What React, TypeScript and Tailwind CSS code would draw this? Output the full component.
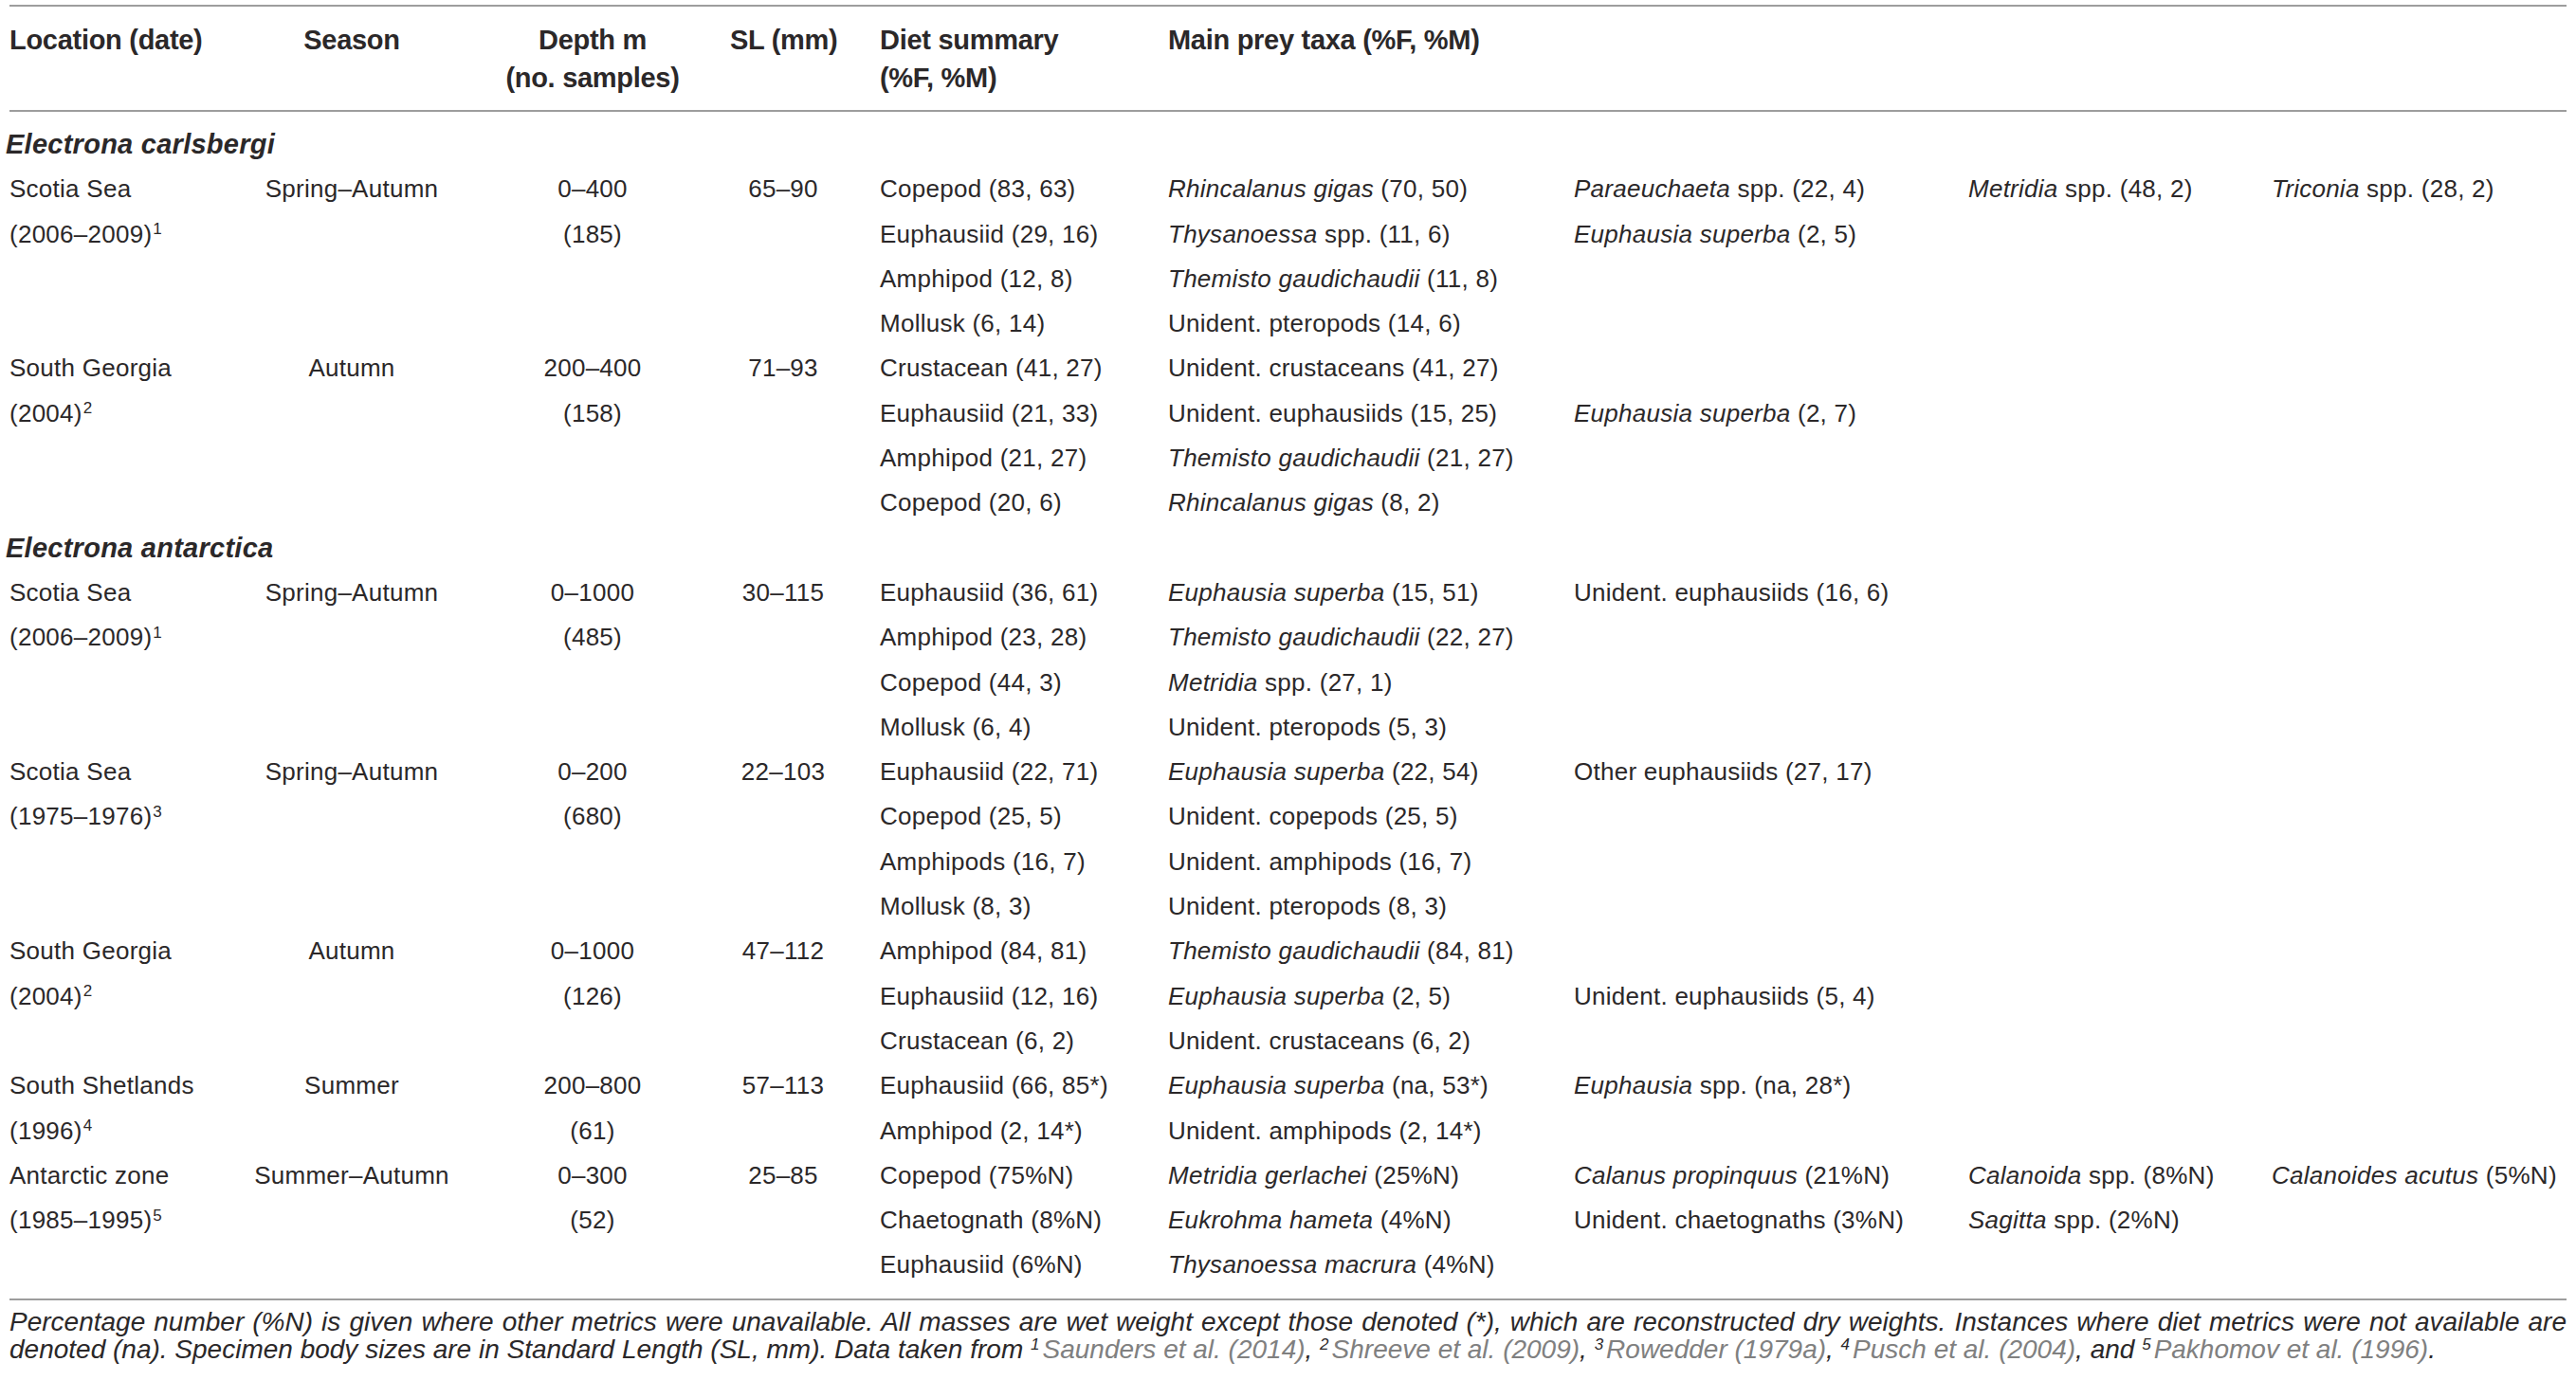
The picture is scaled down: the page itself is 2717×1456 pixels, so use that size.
import React from 'react';

type Group = {
  place: string;
  years: string;
  note: string;
  season: string;
  depth: string;
  samples: string;
  sl: string;
  rows: string[][];
};

type Block = { species: string; groups: Group[] };

// taxa written with _underscores_ around the italic part
const blocks: Block[] = [
  {
    species: 'Electrona carlsbergi',
    groups: [
      {
        place: 'Scotia Sea',
        years: '(2006–2009)',
        note: '1',
        season: 'Spring–Autumn',
        depth: '0–400',
        samples: '(185)',
        sl: '65–90',
        rows: [
          ['Copepod (83, 63)', '_Rhincalanus gigas_ (70, 50)', '_Paraeuchaeta_ spp. (22, 4)', '_Metridia_ spp. (48, 2)', '_Triconia_ spp. (28, 2)'],
          ['Euphausiid (29, 16)', '_Thysanoessa_ spp. (11, 6)', '_Euphausia superba_ (2, 5)'],
          ['Amphipod (12, 8)', '_Themisto gaudichaudii_ (11, 8)'],
          ['Mollusk (6, 14)', 'Unident. pteropods (14, 6)'],
        ],
      },
      {
        place: 'South Georgia',
        years: '(2004)',
        note: '2',
        season: 'Autumn',
        depth: '200–400',
        samples: '(158)',
        sl: '71–93',
        rows: [
          ['Crustacean (41, 27)', 'Unident. crustaceans (41, 27)'],
          ['Euphausiid (21, 33)', 'Unident. euphausiids (15, 25)', '_Euphausia superba_ (2, 7)'],
          ['Amphipod (21, 27)', '_Themisto gaudichaudii_ (21, 27)'],
          ['Copepod (20, 6)', '_Rhincalanus gigas_ (8, 2)'],
        ],
      },
    ],
  },
  {
    species: 'Electrona antarctica',
    groups: [
      {
        place: 'Scotia Sea',
        years: '(2006–2009)',
        note: '1',
        season: 'Spring–Autumn',
        depth: '0–1000',
        samples: '(485)',
        sl: '30–115',
        rows: [
          ['Euphausiid (36, 61)', '_Euphausia superba_ (15, 51)', 'Unident. euphausiids (16, 6)'],
          ['Amphipod (23, 28)', '_Themisto gaudichaudii_ (22, 27)'],
          ['Copepod (44, 3)', '_Metridia_ spp. (27, 1)'],
          ['Mollusk (6, 4)', 'Unident. pteropods (5, 3)'],
        ],
      },
      {
        place: 'Scotia Sea',
        years: '(1975–1976)',
        note: '3',
        season: 'Spring–Autumn',
        depth: '0–200',
        samples: '(680)',
        sl: '22–103',
        rows: [
          ['Euphausiid (22, 71)', '_Euphausia superba_ (22, 54)', 'Other euphausiids (27, 17)'],
          ['Copepod (25, 5)', 'Unident. copepods (25, 5)'],
          ['Amphipods (16, 7)', 'Unident. amphipods (16, 7)'],
          ['Mollusk (8, 3)', 'Unident. pteropods (8, 3)'],
        ],
      },
      {
        place: 'South Georgia',
        years: '(2004)',
        note: '2',
        season: 'Autumn',
        depth: '0–1000',
        samples: '(126)',
        sl: '47–112',
        rows: [
          ['Amphipod (84, 81)', '_Themisto gaudichaudii_ (84, 81)'],
          ['Euphausiid (12, 16)', '_Euphausia superba_ (2, 5)', 'Unident. euphausiids (5, 4)'],
          ['Crustacean (6, 2)', 'Unident. crustaceans (6, 2)'],
        ],
      },
      {
        place: 'South Shetlands',
        years: '(1996)',
        note: '4',
        season: 'Summer',
        depth: '200–800',
        samples: '(61)',
        sl: '57–113',
        rows: [
          ['Euphausiid (66, 85*)', '_Euphausia superba_ (na, 53*)', '_Euphausia_ spp. (na, 28*)'],
          ['Amphipod (2, 14*)', 'Unident. amphipods (2, 14*)'],
        ],
      },
      {
        place: 'Antarctic zone',
        years: '(1985–1995)',
        note: '5',
        season: 'Summer–Autumn',
        depth: '0–300',
        samples: '(52)',
        sl: '25–85',
        rows: [
          ['Copepod (75%N)', '_Metridia gerlachei_ (25%N)', '_Calanus propinquus_ (21%N)', '_Calanoida_ spp. (8%N)', '_Calanoides acutus_ (5%N)'],
          ['Chaetognath (8%N)', '_Eukrohma hameta_ (4%N)', 'Unident. chaetognaths (3%N)', '_Sagitta_ spp. (2%N)'],
          ['Euphausiid (6%N)', '_Thysanoessa macrura_ (4%N)'],
        ],
      },
    ],
  },
];

const cols = 'grid grid-cols-[252px_218px_290px_112px_350px_428px_416px_320px_1fr]';

function Taxon({ text }: { text?: string }) {
  if (!text) return null;
  const parts = text.split('_');
  return (
    <>
      {parts.map((p, i) => (i % 2 ? <em key={i} className="italic">{p}</em> : <span key={i}>{p}</span>))}
    </>
  );
}

function GroupRows({ g }: { g: Group }) {
  const count = Math.max(g.rows.length, 2);
  const lines = Array.from({ length: count }, (_, i) => i);

  return (
    <>
      {lines.map((i) => {
        const row = g.rows[i] || [];
        return (
          <React.Fragment key={i}>
            <div>
              {i === 0 && g.place}
              {i === 1 && (
                <>
                  {g.years}
                  <sup className="text-[17px] ml-px">{g.note}</sup>
                </>
              )}
            </div>
            <div className="text-center">{i === 0 && g.season}</div>
            <div className="text-center">
              {i === 0 && g.depth}
              {i === 1 && g.samples}
            </div>
            <div className="text-center">{i === 0 && g.sl}</div>
            <div className="pl-[46px]">{row[0]}</div>
            <div><Taxon text={row[1]} /></div>
            <div><Taxon text={row[2]} /></div>
            <div><Taxon text={row[3]} /></div>
            <div><Taxon text={row[4]} /></div>
          </React.Fragment>
        );
      })}
    </>
  );
}

function Cite({ n, children }: { n: string; children: React.ReactNode }) {
  return (
    <>
      <sup className="text-[17px] text-[#2b2829] mr-[3px]">{n}</sup>
      <span className="text-[#808080]">{children}</span>
    </>
  );
}

export default function App() {
  return (
    <div className="min-h-screen w-full bg-white pt-[5px] px-[10px] text-[#2b2829] font-['Liberation_Sans',Arial,sans-serif]">
      <div className="border-t-2 border-b-2 border-[#9d9d9d] pt-[15px] pb-[14px]">
        <div className={`${cols} text-[29px] font-bold leading-[40px] tracking-[-0.01em] whitespace-nowrap`}>
          <div>Location (date)</div>
          <div className="text-center">Season</div>
          <div className="text-center">
            <div>Depth m</div>
            <div>(no. samples)</div>
          </div>
          <div className="text-center">SL (mm)</div>
          <div className="pl-[46px]">
            <div>Diet summary</div>
            <div>(%F, %M)</div>
          </div>
          <div className="col-span-4">Main prey taxa (%F, %M)</div>
        </div>
      </div>

      <div className="pt-[11px] pb-[11px]">
        <div className={`${cols} text-[26px] leading-[47.3px] tracking-[0.01em] whitespace-nowrap`}>
          {blocks.map((b) => (
            <React.Fragment key={b.species}>
              <div className="col-span-9 -ml-[4px] text-[29px] font-bold italic">{b.species}</div>
              {b.groups.map((g, k) => (
                <GroupRows key={k} g={g} />
              ))}
            </React.Fragment>
          ))}
        </div>
      </div>

      <div className="border-t-2 border-[#9d9d9d] pt-[8px] text-[28px] leading-[29px] italic">
        <div className="whitespace-nowrap text-justify [text-align-last:justify]">
          Percentage number (%N) is given where other metrics were unavailable. All masses are wet weight except those
          denoted (*), which are reconstructed dry weights. Instances where diet metrics were not available are
        </div>
        <div className="whitespace-nowrap">
          denoted (na). Specimen body sizes are in Standard Length (SL, mm). Data taken from{' '}
          <Cite n="1">Saunders et al. (2014)</Cite>, <Cite n="2">Shreeve et al. (2009)</Cite>,{' '}
          <Cite n="3">Rowedder (1979a)</Cite>, <Cite n="4">Pusch et al. (2004)</Cite>, and{' '}
          <Cite n="5">Pakhomov et al. (1996)</Cite>.
        </div>
      </div>
    </div>
  );
}
